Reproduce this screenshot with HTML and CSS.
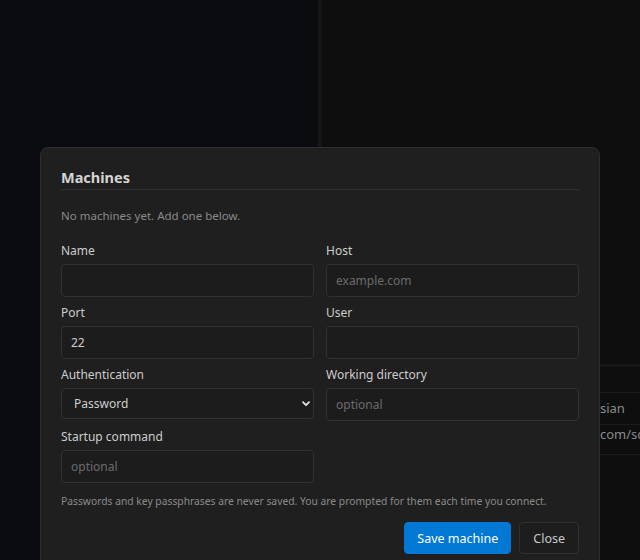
FILE: index.html
```html
<!DOCTYPE html>
<html lang="en">
<head>
  <meta charset="UTF-8">
  <meta name="viewport" content="width=device-width, initial-scale=1.0">
  <title>Machines</title>
  <link rel="stylesheet" href="styles.css">
</head>
<body>
  <div class="app">
    <div class="pane pane-left"></div>
    <div class="splitter"></div>
    <div class="pane pane-right">
      <div class="panel">
        <div class="panel-head"></div>
        <div class="row"><span class="key">Language</span><span class="val">sian</span></div>
        <div class="row row-tight"><span class="key">Source</span><span class="val">com/sc</span></div>
      </div>
    </div>
  </div>

  <div class="modal">
    <h2>Machines</h2>
    <p class="empty">No machines yet. Add one below.</p>

    <div class="form-grid">
      <label class="field">
        <span class="label">Name</span>
        <input type="text">
      </label>
      <label class="field">
        <span class="label">Host</span>
        <input type="text" placeholder="example.com">
      </label>
      <label class="field">
        <span class="label">Port</span>
        <input type="text" value="22">
      </label>
      <label class="field">
        <span class="label">User</span>
        <input type="text">
      </label>
      <label class="field">
        <span class="label">Authentication</span>
        <span class="select-wrap">
          <select>
            <option>Password</option>
            <option>Private key</option>
            <option>Agent</option>
          </select>
          <svg class="chevron" width="8" height="6" viewBox="0 0 8 6">
            <path d="M1 1.2 L4 4.2 L7 1.2" fill="none" stroke="#e0e0e0" stroke-width="1.8" stroke-linecap="round" stroke-linejoin="round"/>
          </svg>
        </span>
      </label>
      <label class="field">
        <span class="label">Working directory</span>
        <input type="text" placeholder="optional">
      </label>
      <label class="field">
        <span class="label">Startup command</span>
        <input type="text" placeholder="optional">
      </label>
    </div>

    <p class="note">Passwords and key passphrases are never saved. You are prompted for them each time you connect.</p>

    <div class="actions">
      <button class="btn btn-primary">Save machine</button>
      <button class="btn">Close</button>
    </div>
  </div>
</body>
</html>
```

FILE: styles.css
```css
:root {
  --left-bg: #0a0c10;
  --right-bg: #0e0e0e;
  --modal-bg: #1f1f1f;
  --modal-border: #2e2e2e;
  --input-bg: #1c1c1c;
  --input-border: #313131;
  --text: #cccccc;
  --muted: #8a8a8a;
  --placeholder: #6b6b6b;
  --accent: #0078d4;
}

* {
  margin: 0;
  padding: 0;
  box-sizing: border-box;
}

html, body {
  height: 100%;
  overflow: hidden;
}

body {
  font-family: "Segoe UI", "Noto Sans", sans-serif;
  background: var(--right-bg);
  color: var(--text);
}

/* background app */
.app {
  display: flex;
  height: 100vh;
}

.pane-left {
  flex: 0 0 318px;
  background: var(--left-bg);
}

.splitter {
  flex: 0 0 4px;
  background: #161616;
}

.pane-right {
  flex: 1;
  min-width: 0;
  overflow: hidden;
  background: var(--right-bg);
}

.panel {
  margin-top: 364px;
  border-top: 3px solid #171717;
}

.panel-head {
  height: 26px;
  border-bottom: 1px solid #1b1b1b;
}

.row {
  display: flex;
  align-items: flex-start;
  height: 32px;
  padding-top: 6px;
  border-bottom: 1px solid #1b1b1b;
  font-size: 13px;
  line-height: 18px;
  color: var(--muted);
  white-space: nowrap;
}

.row-tight {
  height: 30px;
  padding-top: 0;
}

.row .key {
  flex: 0 0 278px;
  padding-left: 12px;
}

/* modal */
.modal {
  position: absolute;
  left: 40px;
  top: 147px;
  width: 560px;
  background: var(--modal-bg);
  border: 1px solid var(--modal-border);
  border-radius: 8px;
  padding: 19px 20px 20px;
}

.modal h2 {
  font-size: 14.5px;
  font-weight: 700;
  line-height: 20px;
  color: #d4d4d4;
  padding-bottom: 2px;
  border-bottom: 1px solid #2f2f2f;
}

.empty {
  margin-top: 18px;
  font-size: 11.5px;
  line-height: 16px;
  color: var(--muted);
}

.form-grid {
  display: grid;
  grid-template-columns: 1fr 1fr;
  column-gap: 12px;
  row-gap: 8px;
  margin-top: 19px;
}

.field {
  display: flex;
  flex-direction: column;
}

.label {
  font-size: 12px;
  line-height: 16px;
  margin-bottom: 5px;
  color: var(--text);
}

input,
select {
  font-family: inherit;
  font-size: 12px;
  color: var(--text);
  background: var(--input-bg);
  border: 1px solid var(--input-border);
  border-radius: 4px;
  outline: none;
}

input {
  height: 33px;
  padding: 0 9px;
}

input::placeholder {
  color: var(--placeholder);
}

.select-wrap {
  position: relative;
  display: flex;
}

select {
  width: 100%;
  height: 31px;
  padding: 0 12px;
  appearance: none;
  -webkit-appearance: none;
}

.chevron {
  position: absolute;
  right: 4px;
  top: 13px;
  pointer-events: none;
}

.note {
  margin-top: 11px;
  font-size: 10.3px;
  line-height: 15px;
  color: var(--muted);
}

.actions {
  display: flex;
  justify-content: flex-end;
  gap: 8px;
  margin-top: 13px;
}

.btn {
  height: 32px;
  padding: 0 13px;
  font-family: inherit;
  font-size: 12.5px;
  color: #c8c8c8;
  background: #1d1d1d;
  border: 1px solid #303030;
  border-radius: 4px;
  cursor: pointer;
}

.btn-primary {
  width: 107px;
  padding: 0;
  color: #ffffff;
  background: var(--accent);
  border-color: var(--accent);
}
```
